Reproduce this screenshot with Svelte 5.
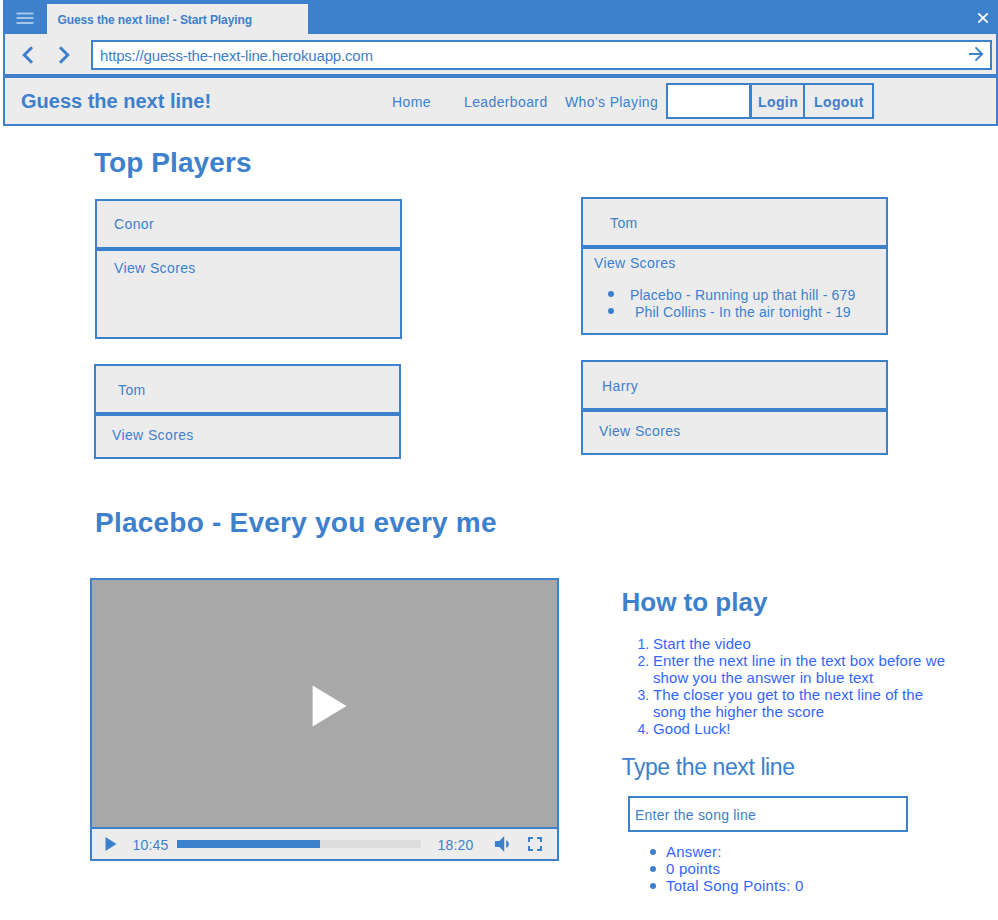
<script>
  const left = [
    { name: 'Conor', cls: 'conor' },
    { name: 'Tom', cls: 'tom-two' }
  ];
  const right = [
    {
      name: 'Tom',
      cls: 'tom',
      scores: ['Placebo - Running up that hill - 679', 'Phil Collins - In the air tonight - 19']
    },
    { name: 'Harry', cls: 'harry' }
  ];
  const answers = ['Answer:', '0 points', 'Total Song Points: 0'];
</script>

{#snippet card(p)}
  <article class="card {p.cls}">
    <header>{p.name}</header>
    <div class="body">
      <span class="view">View Scores</span>
      {#if p.scores}
        <ul class="scores">
          {#each p.scores as s}<li><span>{s}</span></li>{/each}
        </ul>
      {/if}
    </div>
  </article>
{/snippet}

<div class="page">
  <div class="titlebar">
    <svg class="burger" width="18" height="14" viewBox="0 0 18 14"><path d="M.5 2.5h17M.5 7h17M.5 12h17" stroke="#a6c5e9" stroke-width="2" fill="none" /></svg>
    <div class="tab">Guess the next line! - Start Playing</div>
    <svg class="close" width="12" height="12" viewBox="0 0 12 12"><path d="M1.3 1.3l9.4 9.4M10.7 1.3L1.3 10.7" stroke="#fff" stroke-width="1.7" fill="none" /></svg>
  </div>
  <div class="toolbar">
    <svg class="prev" width="12" height="18" viewBox="0 0 12 18"><path d="M10 1.3L2.3 9l7.7 7.7" stroke="#3d80cc" stroke-width="3" fill="none" /></svg>
    <svg class="next" width="12" height="18" viewBox="0 0 12 18"><path d="M2 1.3L9.7 9 2 16.7" stroke="#3d80cc" stroke-width="3" fill="none" /></svg>
    <div class="address">
      <span>https://guess-the-next-line.herokuapp.com</span>
      <svg width="16" height="16" viewBox="0 0 16 16"><path d="M1 8h13M7.5 1.3L14.2 8l-6.7 6.7" stroke="#3d80cc" stroke-width="1.9" fill="none" /></svg>
    </div>
  </div>
  <nav>
    <strong class="brand">Guess the next line!</strong>
    <span class="home">Home</span>
    <span class="leader">Leaderboard</span>
    <span class="who">Who's Playing</span>
    <div class="field"></div>
    <div class="login">Login</div>
    <div class="logout">Logout</div>
  </nav>

  <main>
    <h1>Top Players</h1>
    <section class="players">
      <div class="col">{#each left as p}{@render card(p)}{/each}</div>
      <div class="col">{#each right as p}{@render card(p)}{/each}</div>
    </section>

    <h1 class="song">Placebo - Every you every me</h1>
    <section class="game">
      <div class="video">
        <div class="screen">
          <svg width="35" height="42" viewBox="0 0 35 42"><path d="M.6.6L34.5 21 .6 41.4z" fill="#fff" /></svg>
        </div>
        <div class="controls">
          <svg class="play" width="12" height="14" viewBox="0 0 12 14"><path d="M.5 0L11.5 7 .5 14z" fill="#3d80cc" /></svg>
          <span class="now">10:45</span>
          <div class="track"><div class="bar"></div></div>
          <span class="total">18:20</span>
          <svg class="sound" width="15" height="16" viewBox="0 0 15 16"><path d="M0 5h4.4L9.2 0v16L4.4 11H0z" fill="#3d80cc" /><path d="M11.2 4.2c3.6 1.6 3.6 6 0 7.6z" fill="#3d80cc" /></svg>
          <svg class="full" width="14" height="14" viewBox="0 0 14 14"><path d="M5 1H1v4M9 1h4v4M5 13H1V9M9 13h4V9" stroke="#3d80cc" stroke-width="2" fill="none" /></svg>
        </div>
      </div>
      <aside>
        <h2>How to play</h2>
        <ol>
          <li><i>1.</i><span>Start the video</span></li>
          <li><i>2.</i><span>Enter the next line in the text box before we<br />show you the answer in blue text</span></li>
          <li><i>3.</i><span>The closer you get to the next line of the<br />song the higher the score</span></li>
          <li><i>4.</i><span>Good Luck!</span></li>
        </ol>
        <h3>Type the next line</h3>
        <div class="entry">Enter the song line</div>
        <ul class="answers">
          {#each answers as a}<li>{a}</li>{/each}
        </ul>
      </aside>
    </section>
  </main>
</div>

<style>
  :global(body) { margin: 0; background: #fff; }
  .page, .page * { box-sizing: border-box; }
  .page {
    width: 998px; height: 920px; overflow: hidden; padding-left: 3px;
    font: 14px/16px "Liberation Sans", Arial, sans-serif;
    letter-spacing: 0.38px; color: #3d80cc; white-space: nowrap;
  }
  svg { display: block; flex: none; }
  h1, h2, h3, ul, ol { margin: 0; padding: 0; list-style: none; }

  .titlebar { height: 34px; background: #3d80cc; display: flex; align-items: flex-start; }
  .burger { margin: 11px 0 0 13px; }
  .tab {
    width: 261px; height: 30px; margin: 4px 0 0 13px; padding: 8px 0 0 10.5px;
    background: #ececec; font-size: 12px; font-weight: bold; letter-spacing: -0.1px;
  }
  .close { margin: 12px 9px 0 auto; }
  .toolbar {
    height: 42px; background: #ececec; border: solid #3d80cc; border-width: 0 2px 2px;
    display: flex; align-items: flex-start;
  }
  .prev { margin: 12px 0 0 17px; }
  .next { margin: 12px 0 0 24px; }
  .address {
    flex: 1; height: 30px; margin: 6px 4px 0 21px; padding: 0 6px 0 7px; background: #fff;
    border: 2px solid #3d80cc; display: flex; align-items: center; justify-content: space-between;
    font-size: 15px; letter-spacing: -0.18px; line-height: 18px;
  }
  .address span { padding-top: 2px; }
  .address svg { margin: -2px 0 0; }

  nav {
    height: 50px; background: #ececec; border: 2px solid #3d80cc;
    display: flex; align-items: flex-start;
  }
  nav span { padding-top: 16px; }
  .brand { width: 371px; padding: 12px 0 0 16px; font-size: 20px; line-height: 22px; letter-spacing: 0; }
  .home { width: 88px; padding-left: 16px; }
  .leader { width: 101px; }
  .who { width: 97px; }
  .field, .login, .logout { height: 36px; margin-top: 5px; border: 2px solid #3d80cc; }
  .field { width: 85px; background: #fff; margin-left: 4px; }
  .login, .logout { font-weight: bold; padding-top: 9px; letter-spacing: 0.4px; }
  .login { width: 55px; margin-left: -1px; padding-left: 6px; }
  .logout { width: 71px; margin-left: -2px; padding-left: 9px; }

  main { padding: 21px 0 0 87px; }
  h1 { padding-left: 4px; font-size: 28px; line-height: 32px; letter-spacing: 0.08px; }
  .players { height: 321px; display: flex; gap: 180px; padding-left: 4px; }
  .col { width: 307px; }
  .card { width: 307px; }
  .card header, .card .body { border: 2px solid #3d80cc; background: #ececec; }
  .card header { height: 50px; padding: 15px 0 0 17px; }
  .card .body { height: 45px; padding: 11px 0 0 16px; }
  .view { display: block; }
  .conor { margin: 20px 0 25px 1px; }
  .conor .body { height: 90px; padding: 9px 0 0 17px; }
  .tom-two header { padding: 16px 0 0 22px; }
  .tom { margin: 18px 0 25px; }
  .tom header { padding: 16px 0 0 27px; }
  .tom .body { height: 88px; padding: 6px 0 0 11px; }
  .harry header { padding: 16px 0 0 19px; }
  .scores { margin-top: 16px; }
  .scores li { height: 17px; line-height: 17px; display: flex; letter-spacing: 0.19px; }
  .scores li::before { content: ""; width: 6px; height: 6px; border-radius: 50%; background: #3d80cc; margin: 4px 16px 0 14px; }
  .scores li + li span { padding-left: 5px; letter-spacing: 0.15px; }
  .song { padding-left: 5px; margin-top: 7px; letter-spacing: 0.23px; }

  .game { display: flex; margin-top: 39px; }
  .video { width: 469px; height: 283px; border: 2px solid #3d80cc; }
  .screen { height: 249px; background: #a8a8a8; border-bottom: 2px solid #3d80cc; display: flex; padding: 105px 0 0 220px; }
  .controls { height: 30px; background: #ececec; display: flex; align-items: center; letter-spacing: 0.2px; }
  .controls span { padding-top: 2px; }
  .play { margin-left: 12.5px; }
  .now { margin-left: 16px; flex: none; width: 44.5px; }
  .track { width: 244px; height: 8px; background: #ddd; }
  .bar { width: 143px; height: 8px; background: #3d80cc; }
  .total { margin-left: 16.5px; width: 57.5px; }
  .full { margin-left: 18px; }

  aside { padding-left: 62.5px; }
  h2 { margin-top: 9px; font-size: 26px; line-height: 30px; letter-spacing: 0; }
  ol { margin-top: 18px; color: #3366ff; font-size: 15px; line-height: 17px; letter-spacing: 0.08px; }
  ol li { display: flex; }
  ol i { width: 31.5px; padding: 1px 0 0 16px; font-style: normal; font-size: 14px; line-height: 16px; }
  h3 { margin-top: 16px; font-size: 23px; line-height: 28px; font-weight: normal; letter-spacing: -0.4px; }
  .entry { width: 280px; height: 36px; margin: 15px 0 0 6.5px; padding: 9px 0 0 5px; border: 2px solid #3d80cc; letter-spacing: 0.22px; }
  .answers { margin: 11px 0 0 28px; color: #3366ff; font-size: 15px; line-height: 17px; letter-spacing: 0.2px; }
  .answers li { display: flex; align-items: center; }
  .answers li::before { content: ""; width: 6px; height: 6px; border-radius: 50%; background: #3d80cc; margin-right: 10.5px; }
</style>
